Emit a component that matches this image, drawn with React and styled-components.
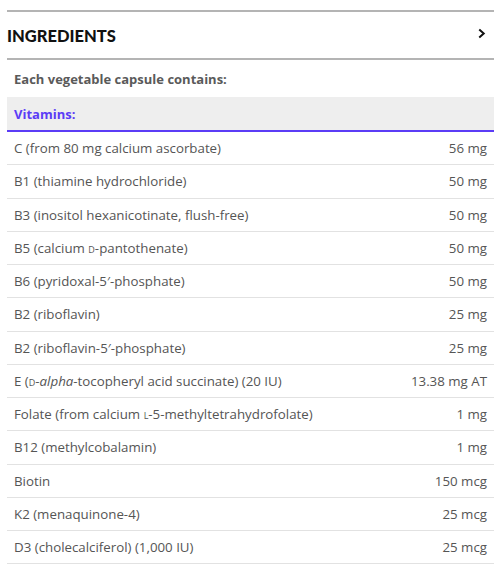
import React from 'react';
import styled, { createGlobalStyle } from 'styled-components';

const GlobalStyle = createGlobalStyle`
    body {
        margin: 0;
        background: #fff;
        font-family: "Open Sans", "Liberation Sans", sans-serif;
    }
`;

const vitamins = [
    { name: 'C (from 80 mg calcium ascorbate)', amount: '56 mg' },
    { name: 'B1 (thiamine hydrochloride)', amount: '50 mg' },
    { name: 'B3 (inositol hexanicotinate, flush-free)', amount: '50 mg' },
    { name: <>B5 (calcium <SmallCaps>d</SmallCaps>-pantothenate)</>, amount: '50 mg' },
    { name: 'B6 (pyridoxal-5′-phosphate)', amount: '50 mg' },
    { name: 'B2 (riboflavin)', amount: '25 mg' },
    { name: 'B2 (riboflavin-5′-phosphate)', amount: '25 mg' },
    { name: <>E (<SmallCaps>d</SmallCaps>-<i>alpha</i>-tocopheryl acid succinate) (20 IU)</>, amount: '13.38 mg AT' },
    { name: <>Folate (from calcium <SmallCaps>l</SmallCaps>-5-methyltetrahydrofolate)</>, amount: '1 mg' },
    { name: 'B12 (methylcobalamin)', amount: '1 mg' },
    { name: 'Biotin', amount: '150 mcg' },
    { name: 'K2 (menaquinone-4)', amount: '25 mcg' },
    { name: 'D3 (cholecalciferol) (1,000 IU)', amount: '25 mcg' },
];

function App() {
    return (
        <>
            <GlobalStyle />
            <Panel>
                <Header>
                    <Title>INGREDIENTS</Title>
                    <Chevron viewBox="0 0 10 12" aria-hidden="true">
                        <path d="M2.5 1.5 L7.5 6 L2.5 10.5" />
                    </Chevron>
                </Header>
                <Intro>Each vegetable capsule contains:</Intro>
                <Group>Vitamins:</Group>
                {vitamins.map((v, i) => (
                    <Row key={i}>
                        <span>{v.name}</span>
                        <Amount>{v.amount}</Amount>
                    </Row>
                ))}
            </Panel>
        </>
    );
}

function SmallCaps({ children }) {
    return <Caps>{children}</Caps>;
}

const Caps = styled.span`
    font-variant: small-caps;
    text-transform: lowercase;
`;

const Panel = styled.section`
    width: 487px;
    margin: 10px 0 0 7px;
    color: #555;
`;

const Header = styled.div`
    display: flex;
    align-items: center;
    justify-content: space-between;
    height: 50px;
    box-sizing: border-box;
    border-top: 2px solid #b4b4b4;
    border-bottom: 2px solid #b4b4b4;
    padding: 2px 8px 0 0;
`;

const Title = styled.h2`
    margin: 0;
    font-family: Lato, "Liberation Sans", sans-serif;
    font-size: 16.5px;
    font-weight: 900;
    color: #111;
`;

const Chevron = styled.svg`
    width: 9px;
    height: 11px;
    margin-bottom: 6px;
    path {
        fill: none;
        stroke: #111;
        stroke-width: 2.2;
    }
`;

const Intro = styled.div`
    height: 37px;
    display: flex;
    align-items: center;
    padding-left: 7px;
    font-size: 13px;
    font-weight: 700;
    color: #5a5a5a;
`;

const Group = styled.div`
    height: 35px;
    box-sizing: border-box;
    display: flex;
    align-items: center;
    padding-left: 7px;
    background: #eeeeee;
    border-bottom: 2px solid #5b3cf6;
    font-size: 13px;
    font-weight: 700;
    color: #5b3cf6;
`;

const Row = styled.div`
    height: 33.25px;
    box-sizing: border-box;
    display: flex;
    align-items: center;
    justify-content: space-between;
    padding: 0 7px;
    border-bottom: 1px solid #e2e2e2;
    font-size: 13.3px;
    color: #555;
`;

const Amount = styled.span`
    text-align: right;
`;

export default App;
